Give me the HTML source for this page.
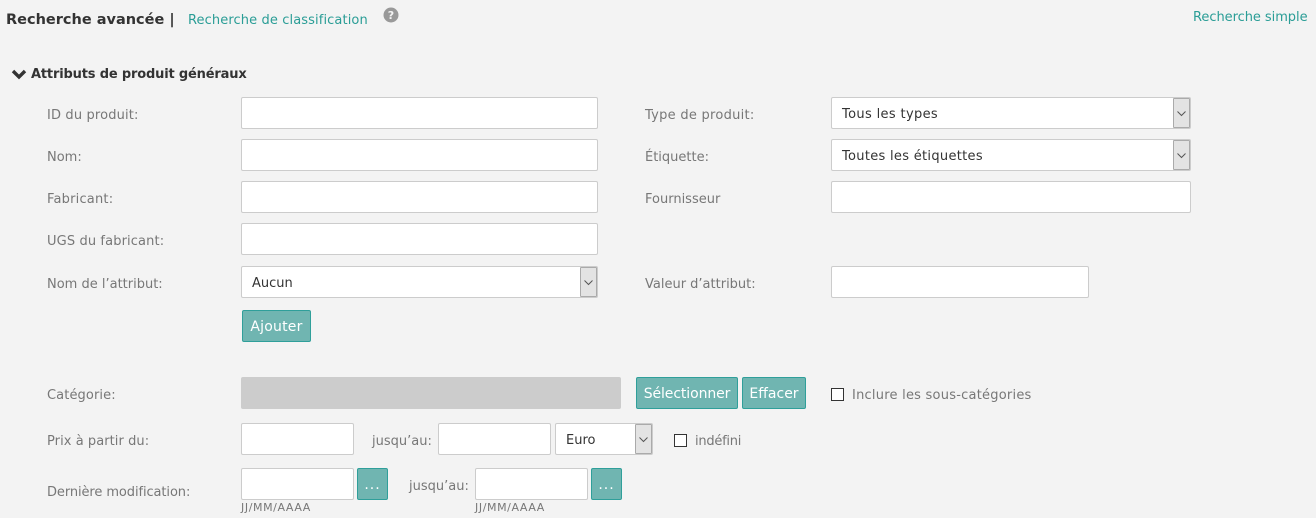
<!DOCTYPE html>
<html lang="fr"><head><meta charset="utf-8"><title>Recherche avancée</title>
<style>
html,body{margin:0;padding:0;width:1316px;height:518px;overflow:hidden;background:#f3f3f3}
body{position:relative;font-family:"DejaVu Sans",Verdana,sans-serif;font-size:13px;color:#777}
.t{position:absolute;white-space:nowrap;line-height:16px}
.l{color:#777}
.a{color:#2a9d96}
.b{position:absolute;box-sizing:border-box;height:32px;background:#fff;border:1px solid #ccc;border-radius:2px}
.s{color:#333;padding-left:10px;line-height:33px;white-space:nowrap}
.s i{position:absolute;right:0;top:0;width:17px;height:30px;box-sizing:border-box;background:#e3e3e3;border:1px solid #aaa;border-radius:1px}
.s svg{position:absolute;left:3px;top:11px}
.btn{position:absolute;box-sizing:border-box;height:32px;background:#70b5b1;border:1px solid #2f9f9a;border-radius:2px;color:#fff;text-align:center;line-height:33px;font-size:14px;white-space:nowrap}
.d{font-size:14px;letter-spacing:1px;line-height:33px}
.c{position:absolute;box-sizing:border-box;width:13px;height:13px;background:#fff;border:1px solid #333}
</style></head><body>
<div class="t" style="left:6px;top:12px;font-size:14.5px;font-weight:bold;color:#333">Recherche avancée |</div>
<div class="t a" style="left:188px;top:13px;letter-spacing:.11px">Recherche de classification</div>
<svg style="position:absolute;left:383px;top:7px" width="16" height="16" viewBox="0 0 16 16"><circle cx="8" cy="8" r="7.5" fill="#999"/><text x="8" y="12" text-anchor="middle" font-family="DejaVu Sans" font-weight="bold" font-size="11" fill="#f3f3f3">?</text></svg>
<div class="t a" style="left:1193px;top:10px;letter-spacing:-.05px">Recherche simple</div>

<svg style="position:absolute;left:11px;top:68px" width="16" height="12" viewBox="0 0 16 12"><path d="M2 3L8 9L14 3" fill="none" stroke="#333" stroke-width="3.4"/></svg>
<div class="t" style="left:31px;top:67px;font-weight:bold;color:#333;letter-spacing:-.17px">Attributs de produit généraux</div>

<div class="t l" style="left:47px;top:108px;letter-spacing:.15px">ID du produit:</div>
<div class="t l" style="left:47px;top:150px">Nom:</div>
<div class="t l" style="left:47px;top:192px;letter-spacing:.2px">Fabricant:</div>
<div class="t l" style="left:47px;top:234px;letter-spacing:.12px">UGS du fabricant:</div>
<div class="t l" style="left:47px;top:277px">Nom de l’attribut:</div>
<div class="t l" style="left:47px;top:388px;letter-spacing:.1px">Catégorie:</div>
<div class="t l" style="left:47px;top:434px;letter-spacing:.06px">Prix à partir du:</div>
<div class="t l" style="left:47px;top:485px;letter-spacing:-.09px">Dernière modification:</div>

<div class="b" style="left:241px;top:97px;width:357px"></div>
<div class="b" style="left:241px;top:139px;width:357px"></div>
<div class="b" style="left:241px;top:181px;width:357px"></div>
<div class="b" style="left:241px;top:223px;width:357px"></div>
<div class="b s" style="left:241px;top:266px;width:357px">Aucun<i><svg width="9" height="7" viewBox="0 0 9 7"><path d="M0.500 1.500L4.500 5.500L8.500 1.500" fill="none" stroke="#555" stroke-width="1"/></svg></i></div>

<div class="t l" style="left:645px;top:108px;letter-spacing:.27px">Type de produit:</div>
<div class="t l" style="left:645px;top:150px">Étiquette:</div>
<div class="t l" style="left:645px;top:192px">Fournisseur</div>
<div class="t l" style="left:645px;top:277px">Valeur d’attribut:</div>

<div class="b s" style="left:831px;top:97px;width:360px;letter-spacing:.35px">Tous les types<i><svg width="9" height="7" viewBox="0 0 9 7"><path d="M0.500 1.500L4.500 5.500L8.500 1.500" fill="none" stroke="#555" stroke-width="1"/></svg></i></div>
<div class="b s" style="left:831px;top:139px;width:360px;letter-spacing:.3px">Toutes les étiquettes<i><svg width="9" height="7" viewBox="0 0 9 7"><path d="M0.500 1.500L4.500 5.500L8.500 1.500" fill="none" stroke="#555" stroke-width="1"/></svg></i></div>
<div class="b" style="left:831px;top:181px;width:360px"></div>
<div class="b" style="left:831px;top:266px;width:258px"></div>

<div class="btn" style="left:242px;top:310px;width:69px;letter-spacing:.2px">Ajouter</div>

<div style="position:absolute;left:241px;top:377px;width:380px;height:32px;background:#ccc;border-radius:2px"></div>
<div class="btn" style="left:636px;top:377px;width:102px;letter-spacing:-.1px">Sélectionner</div>
<div class="btn" style="left:742px;top:377px;width:64px">Effacer</div>
<div class="c" style="left:831px;top:388px"></div>
<div class="t l" style="left:852px;top:388px;letter-spacing:.23px">Inclure les sous-catégories</div>

<div class="b" style="left:241px;top:423px;width:113px"></div>
<div class="t l" style="left:372px;top:434px">jusqu’au:</div>
<div class="b" style="left:438px;top:423px;width:113px"></div>
<div class="b s" style="left:555px;top:423px;width:98px">Euro<i><svg width="9" height="7" viewBox="0 0 9 7"><path d="M0.500 1.500L4.500 5.500L8.500 1.500" fill="none" stroke="#555" stroke-width="1"/></svg></i></div>
<div class="c" style="left:674px;top:434px"></div>
<div class="t l" style="left:695px;top:434px;letter-spacing:-.25px">indéfini</div>

<div class="b" style="left:241px;top:468px;width:113px"></div>
<div class="btn d" style="left:357px;top:468px;width:31px">...</div>
<div class="t l" style="left:409px;top:479px">jusqu’au:</div>
<div class="b" style="left:475px;top:468px;width:113px"></div>
<div class="btn d" style="left:591px;top:468px;width:31px">...</div>
<div class="t l" style="left:241px;top:500px;font-size:11px;letter-spacing:.6px">JJ/MM/AAAA</div>
<div class="t l" style="left:475px;top:500px;font-size:11px;letter-spacing:.6px">JJ/MM/AAAA</div>
</body></html>
